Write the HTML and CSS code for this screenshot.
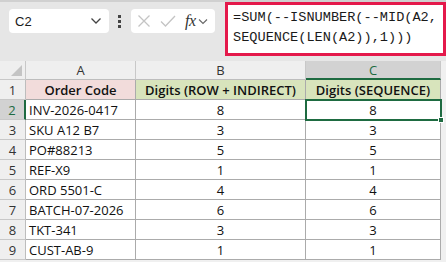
FILE: index.html
```html
<!DOCTYPE html>
<html>
<head>
<meta charset="utf-8">
<link rel="stylesheet" href="styles.css">
</head>
<body>
<div class="app">
  <div class="topbar">
    <div class="namebox">
      <span class="ref">C2</span>
      <svg class="chev" width="12" height="8" viewBox="0 0 12 8"><path d="M1.5 1.5 L6 6 L10.5 1.5" fill="none" stroke="#444" stroke-width="1.3"/></svg>
    </div>
    <div class="dots"><i></i><i></i><i></i></div>
    <div class="fxbox">
      <svg width="14" height="14" viewBox="0 0 14 14" class="ico-x"><path d="M1.5 1.5 L12.5 12.5 M12.5 1.5 L1.5 12.5" stroke="#c4c4c4" stroke-width="1.3" fill="none"/></svg>
      <svg width="16" height="14" viewBox="0 0 16 14" class="ico-ok"><path d="M1 7.5 L5.5 12 L15 2" stroke="#c4c4c4" stroke-width="1.3" fill="none"/></svg>
      <span class="fx">fx</span>
      <svg class="chev2" width="10" height="7" viewBox="0 0 10 7"><path d="M1 1.5 L5 5.5 L9 1.5" fill="none" stroke="#666" stroke-width="1.1"/></svg>
    </div>
    <div class="formula">=SUM(--ISNUMBER(--MID(A2,<br>SEQUENCE(LEN(A2)),1)))</div>
  </div>
  <div class="grid">
    <div class="corner"><span class="tri"></span></div>
    <div class="colh">A</div>
    <div class="colh">B</div>
    <div class="colh sel">C</div>

    <div class="rowh">1</div>
    <div class="c hd pink">Order Code</div>
    <div class="c hd green">Digits (ROW + INDIRECT)</div>
    <div class="c hd green">Digits (SEQUENCE)</div>

    <div class="rowh sel">2</div>
    <div class="c">INV-2026-0417</div>
    <div class="c n">8</div>
    <div class="c n active">8<span class="handle"></span></div>

    <div class="rowh">3</div>
    <div class="c">SKU A12 B7</div>
    <div class="c n">3</div>
    <div class="c n">3</div>

    <div class="rowh">4</div>
    <div class="c">PO#88213</div>
    <div class="c n">5</div>
    <div class="c n">5</div>

    <div class="rowh">5</div>
    <div class="c">REF-X9</div>
    <div class="c n">1</div>
    <div class="c n">1</div>

    <div class="rowh">6</div>
    <div class="c">ORD 5501-C</div>
    <div class="c n">4</div>
    <div class="c n">4</div>

    <div class="rowh">7</div>
    <div class="c">BATCH-07-2026</div>
    <div class="c n">6</div>
    <div class="c n">6</div>

    <div class="rowh">8</div>
    <div class="c">TKT-341</div>
    <div class="c n">3</div>
    <div class="c n">3</div>

    <div class="rowh">9</div>
    <div class="c">CUST-AB-9</div>
    <div class="c n">1</div>
    <div class="c n">1</div>
  </div>
</div>
</body>
</html>
```
FILE: styles.css
```css
* { box-sizing: border-box; }
html, body { margin: 0; padding: 0; }
body {
  width: 446px;
  height: 262px;
  overflow: hidden;
  background: #f0f0f0;
  font-family: "Open Sans", "Noto Sans", sans-serif;
}
.app { width: 446px; height: 262px; }
.topbar {
  position: relative;
  height: 61px;
  background: #e6e6e6;
  border-top: 2px solid #d0d0d0;
}
.namebox {
  position: absolute;
  left: 9px; top: 7px;
  width: 100px; height: 24px;
  background: #fff;
  border-radius: 4px;
  display: flex;
  align-items: center;
  justify-content: space-between;
  padding: 0 7px 0 6px;
}
.namebox .ref { font-size: 13px; color: #1a1a1a; font-family: "Liberation Sans", sans-serif; }
.dots {
  position: absolute;
  left: 118px; top: 13px;
  display: flex; flex-direction: column; gap: 2px;
}
.dots i { display: block; width: 3px; height: 3px; background: #444; }
.fxbox {
  position: absolute;
  left: 131px; top: 7px;
  width: 84px; height: 24px;
  background: #fff;
  border-radius: 4px;
  display: flex;
  align-items: center;
  padding-left: 6px;
}
.ico-x { margin-right: 9px; }
.ico-ok { margin-right: 9px; }
.fx {
  font-family: "Liberation Serif", serif;
  font-style: italic;
  font-size: 16px;
  color: #333;
  margin-right: 2px;
  letter-spacing: -0.5px;
}
.formula {
  position: absolute;
  left: 225px; top: 0px;
  width: 221px; height: 54px;
  background: #fff;
  border: 3px solid #e4194b;
  font-family: "Liberation Mono", monospace;
  font-size: 13.6px;
  line-height: 20px;
  color: #1a1a1a;
  padding: 3px 0 0 5px;
  white-space: nowrap;
}
.grid {
  display: grid;
  grid-template-columns: 26px 110px 170px 135px;
  grid-template-rows: 19px repeat(9, 20px);
}
.corner {
  position: relative;
  background: #efefef;
  border-right: 1px solid #c8c8c8;
  border-bottom: 1px solid #c8c8c8;
}
.tri {
  position: absolute;
  right: 3px; bottom: 3px;
  width: 0; height: 0;
  border-left: 11px solid transparent;
  border-bottom: 11px solid #c4c4c4;
}
.colh {
  background: #efefef;
  border-right: 1px solid #c8c8c8;
  border-bottom: 1px solid #bdbdbd;
  font-size: 13px;
  color: #333;
  display: flex; align-items: center; justify-content: center;
}
.colh.sel {
  background: #d2d2d2;
  color: #1e6b41;
  border-bottom: 2px solid #1e6b41;
}
.rowh {
  background: #efefef;
  border-right: 1px solid #bdbdbd;
  border-bottom: 1px solid #c8c8c8;
  font-size: 13px;
  color: #333;
  display: flex; align-items: center; justify-content: center;
}
.rowh.sel {
  background: #d2d2d2;
  color: #1e6b41;
  border-right: 2px solid #1e6b41;
}
.c {
  background: #fff;
  border-right: 1px solid #ababab;
  border-bottom: 1px solid #ababab;
  font-size: 13px;
  color: #111;
  display: flex; align-items: center;
  padding-left: 3px;
  white-space: nowrap;
  overflow: hidden;
}
.c.n { justify-content: center; padding-left: 0; }
.c.hd { justify-content: center; font-weight: 600; padding-left: 0; }
.pink { background: #f2dcdb; }
.green { background: #d8e4bc; }
.active {
  position: relative;
  overflow: visible;
  outline: 2px solid #1e6b41;
  outline-offset: -1px;
}
.handle {
  position: absolute;
  right: -4px; bottom: -4px;
  width: 6px; height: 6px;
  background: #1e6b41;
  border: 1px solid #fff;
}
```
